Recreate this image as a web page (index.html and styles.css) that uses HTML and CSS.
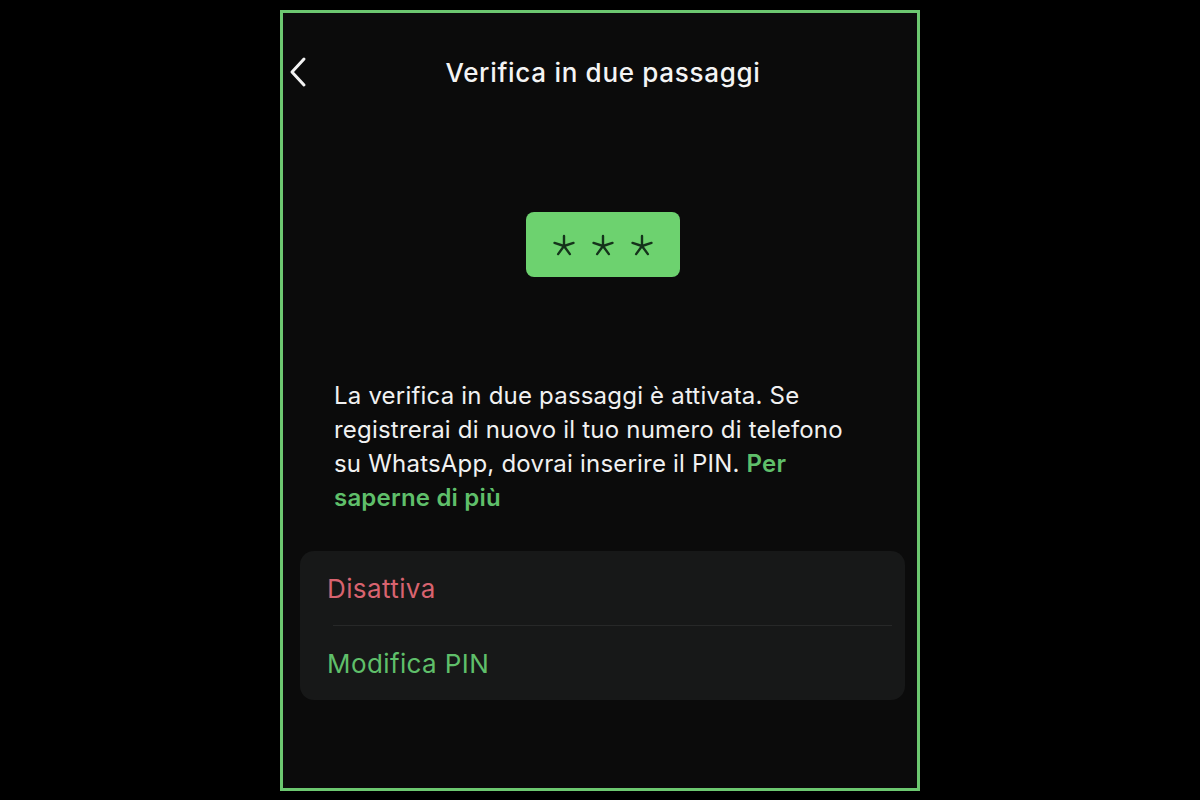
FILE: index.html
```html
<!DOCTYPE html>
<html lang="it">
<head>
<meta charset="utf-8">
<title>Verifica in due passaggi</title>
<link rel="stylesheet" href="styles.css">
</head>
<body>
<div class="frame">
  <header class="topbar">
    <span class="back">
      <svg width="18" height="32" viewBox="0 0 18 32"><path d="M15 3 L3 16 L15 29" fill="none" stroke="#f2f2f2" stroke-width="3" stroke-linecap="round" stroke-linejoin="round"/></svg>
    </span>
    <h1 class="title">Verifica in due passaggi</h1>
    <span></span>
  </header>
  <div class="hero">
    <div class="pin">
      <svg width="24" height="24" viewBox="-12 -12 24 24"><g stroke="#15331b" stroke-width="2.4" stroke-linecap="round"><line x1="0" y1="0" x2="0" y2="-10"/><line x1="0" y1="0" x2="9.5" y2="-3.1"/><line x1="0" y1="0" x2="5.9" y2="8.1"/><line x1="0" y1="0" x2="-5.9" y2="8.1"/><line x1="0" y1="0" x2="-9.5" y2="-3.1"/></g></svg>
      <svg width="24" height="24" viewBox="-12 -12 24 24"><g stroke="#15331b" stroke-width="2.4" stroke-linecap="round"><line x1="0" y1="0" x2="0" y2="-10"/><line x1="0" y1="0" x2="9.5" y2="-3.1"/><line x1="0" y1="0" x2="5.9" y2="8.1"/><line x1="0" y1="0" x2="-5.9" y2="8.1"/><line x1="0" y1="0" x2="-9.5" y2="-3.1"/></g></svg>
      <svg width="24" height="24" viewBox="-12 -12 24 24"><g stroke="#15331b" stroke-width="2.4" stroke-linecap="round"><line x1="0" y1="0" x2="0" y2="-10"/><line x1="0" y1="0" x2="9.5" y2="-3.1"/><line x1="0" y1="0" x2="5.9" y2="8.1"/><line x1="0" y1="0" x2="-5.9" y2="8.1"/><line x1="0" y1="0" x2="-9.5" y2="-3.1"/></g></svg>
    </div>
  </div>
  <p class="desc">La verifica in due passaggi è attivata. Se registrerai di nuovo il tuo numero di telefono su WhatsApp, dovrai inserire il PIN. <a class="link">Per saperne di più</a></p>
  <div class="card">
    <div class="row danger">Disattiva</div>
    <div class="sep"></div>
    <div class="row ok">Modifica PIN</div>
  </div>
</div>
</body>
</html>
```
FILE: styles.css
```css
html, body {
  margin: 0;
  padding: 0;
  background: #000;
}
body {
  font-family: Inter, Roboto, "Liberation Sans", sans-serif;
  padding-top: 10px;
}
.frame {
  box-sizing: border-box;
  width: 640px;
  height: 781px;
  margin: 0 auto;
  border: 3px solid #6cc770;
  background: #0b0b0b;
  display: flex;
  flex-direction: column;
}
.topbar {
  display: grid;
  grid-template-columns: 1fr auto 1fr;
  align-items: center;
  height: 40px;
  margin-top: 39px;
  padding: 0 6px;
}
.back {
  display: flex;
  align-items: center;
}
.title {
  margin: 0;
  color: #f4f4f4;
  font-size: 26px;
  font-weight: 500;
  letter-spacing: 0.7px;
  padding-left: 6px;
}
.hero {
  display: flex;
  justify-content: center;
  padding-left: 6px;
  margin-top: 120px;
}
.pin {
  width: 154px;
  height: 65px;
  border-radius: 8px;
  background: #6dd26f;
  display: flex;
  align-items: center;
  justify-content: center;
  gap: 15px;
  padding-top: 3px;
  box-sizing: border-box;
}
.desc {
  margin: 102px 0 0 51px;
  width: 525px;
  color: #f1f1f1;
  font-size: 24px;
  letter-spacing: 0.2px;
  line-height: 34px;
}
.link {
  color: #5fbf6a;
  font-weight: 600;
}
.card {
  margin: 36px 0 0 17px;
  width: 605px;
  height: 149px;
  border-radius: 14px;
  background: #171818;
  display: flex;
  flex-direction: column;
}
.row {
  flex: 1;
  display: flex;
  align-items: center;
  padding-left: 27px;
  font-size: 26px;
  letter-spacing: 0.4px;
}
.sep {
  height: 1px;
  background: #272828;
  margin: 0 13px 0 33px;
}
.danger { color: #d8636f; }
.ok { color: #5fbf6a; }
```
